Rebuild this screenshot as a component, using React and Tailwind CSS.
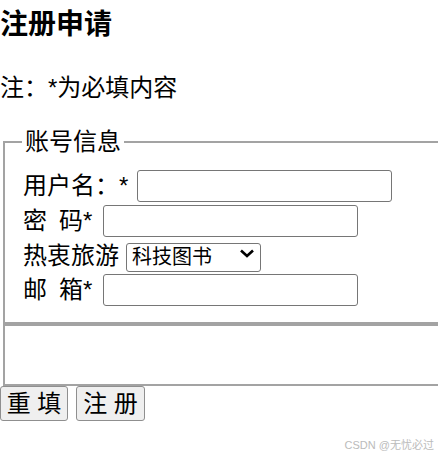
import React from 'react'

const font = "font-['Liberation_Sans','Noto_Sans_CJK_SC',sans-serif]"

const App = () => {
  return (
    <div className={`w-[438px] h-[458px] overflow-hidden bg-white text-black ${font}`}>
      <h1 className="mt-[8px] text-[28px] leading-[34px] font-bold">注册申请</h1>
      <p className="mt-[32px] text-[24px] leading-[28px]">注：*为必填内容</p>

      <form className="w-[480px]">
        <fieldset className="mt-[28px] ml-[3px] border-[2px] border-[#a3a3a3] pl-[18px] pt-[15px] pb-[15px]">
          <legend className="-ml-px px-[3px] text-[24px] leading-[24px]">账号信息</legend>

          <div className="flex items-center h-[34px] text-[24px]">
            <span>用户名：*</span>
            <input type="text" className="ml-[9px] w-[255px] h-[32px] border-[1.5px] border-[#767676] rounded-[3px] bg-white" />
          </div>

          <div className="flex items-center h-[34px] mt-[1px] text-[24px]">
            <span>密</span>
            <span className="ml-[12px]">码*</span>
            <input type="password" className="ml-[11px] w-[255px] h-[32px] border-[1.5px] border-[#767676] rounded-[3px] bg-white" />
          </div>

          <div className="flex items-center h-[34px] mt-[1px] text-[24px]">
            <span>热衷旅游</span>
            <div className="relative ml-[7px]">
              <select
                defaultValue="tech"
                className="appearance-none w-[135px] h-[29px] border-[1.5px] border-[#767676] rounded-[3px] bg-white pl-[5px] text-[20px] leading-[24px] text-black"
              >
                <option value="tech">科技图书</option>
                <option value="travel">旅游</option>
              </select>
              <svg className="absolute right-[6px] top-[11px] pointer-events-none" width="16" height="9" viewBox="0 0 16 9">
                <path d="M2 1.5 L8 7 L14 1.5" fill="none" stroke="#000" strokeWidth="2.6" />
              </svg>
            </div>
          </div>

          <div className="flex items-center h-[34px] text-[24px]">
            <span>邮</span>
            <span className="ml-[12px]">箱*</span>
            <input type="email" className="ml-[11px] w-[255px] h-[32px] border-[1.5px] border-[#767676] rounded-[3px] bg-white" />
          </div>
        </fieldset>

        <fieldset className="ml-[3px] h-[62px] border-[2px] border-[#a3a3a3]"></fieldset>

        <div className="flex gap-[8px]">
          <button type="reset" className="w-[68px] h-[35px] border-[1.5px] border-[#8f8f8f] rounded-[3px] bg-[#efefef] text-[24px] leading-[28px]">
            重 填
          </button>
          <button type="submit" className="w-[69px] h-[35px] border-[1.5px] border-[#8f8f8f] rounded-[3px] bg-[#efefef] text-[24px] leading-[28px]">
            注 册
          </button>
        </div>
      </form>

      <div className="mt-[18px] pr-[4px] text-right text-[11px] leading-[12px] text-[#bbbbbb]">
        CSDN @无忧必过
      </div>
    </div>
  )
}

export default App
